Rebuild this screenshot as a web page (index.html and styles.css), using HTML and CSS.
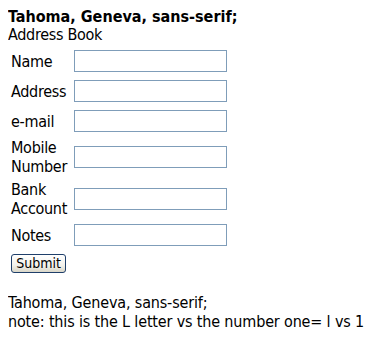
FILE: index.html
```html
<!DOCTYPE html>
<html>
<head>
<meta charset="utf-8">
<link rel="stylesheet" href="styles.css">
</head>
<body>
<div class="title">Tahoma, Geneva, sans-serif;</div>
<div class="subtitle">Address Book</div>
<form>
<table class="book">
<tr><td class="label">Name</td><td><input class="field" type="text"></td></tr>
<tr><td class="label">Address</td><td><input class="field" type="text"></td></tr>
<tr><td class="label">e-mail</td><td><input class="field" type="text"></td></tr>
<tr><td class="label">Mobile<br>Number</td><td><input class="field" type="text"></td></tr>
<tr><td class="label">Bank<br>Account</td><td><input class="field" type="text"></td></tr>
<tr><td class="label">Notes</td><td><input class="field" type="text"></td></tr>
<tr><td class="label" colspan="2"><button class="submit" type="button">Submit</button></td></tr>
</table>
</form>
<p class="note">Tahoma, Geneva, sans-serif;<br>note: this is the L letter vs the number one= l vs 1</p>
</body>
</html>
```
FILE: styles.css
```css
body {
  margin: 8px;
  font-family: "DejaVu Sans Condensed", "DejaVu Sans", sans-serif;
  font-size: 16px;
  line-height: 19px;
  letter-spacing: -0.3px;
  color: #000;
  background: #fff;
}
.title {
  font-weight: bold;
  font-size: 16px;
  line-height: 17px;
  letter-spacing: 0;
}
.subtitle {
  line-height: 20px;
}
form {
  margin: 0;
}
.book {
  border-collapse: separate;
  border-spacing: 2px;
}
.book td {
  padding: 1px;
  vertical-align: middle;
}
.label {
  width: 59px;
  text-align: left;
}
.field {
  display: block;
  box-sizing: border-box;
  width: 153px;
  height: 22px;
  margin: 2px 0;
  border: 1px solid #7f9db9;
  background: #fff;
  padding: 0 2px;
}
.submit {
  display: block;
  box-sizing: border-box;
  width: 55px;
  height: 19px;
  margin: 2px 0;
  padding: 0;
  border: 1px solid #1f3f6a;
  border-radius: 3px;
  background: linear-gradient(#ffffff, #f3f2ec 60%, #d9d6c8);
  font-family: "DejaVu Sans Condensed", "DejaVu Sans", sans-serif;
  font-size: 14px;
  line-height: 17px;
  letter-spacing: 0;
  color: #000;
}
.note {
  margin: 15px 0 0;
  white-space: nowrap;
  letter-spacing: -0.16px;
}
```
